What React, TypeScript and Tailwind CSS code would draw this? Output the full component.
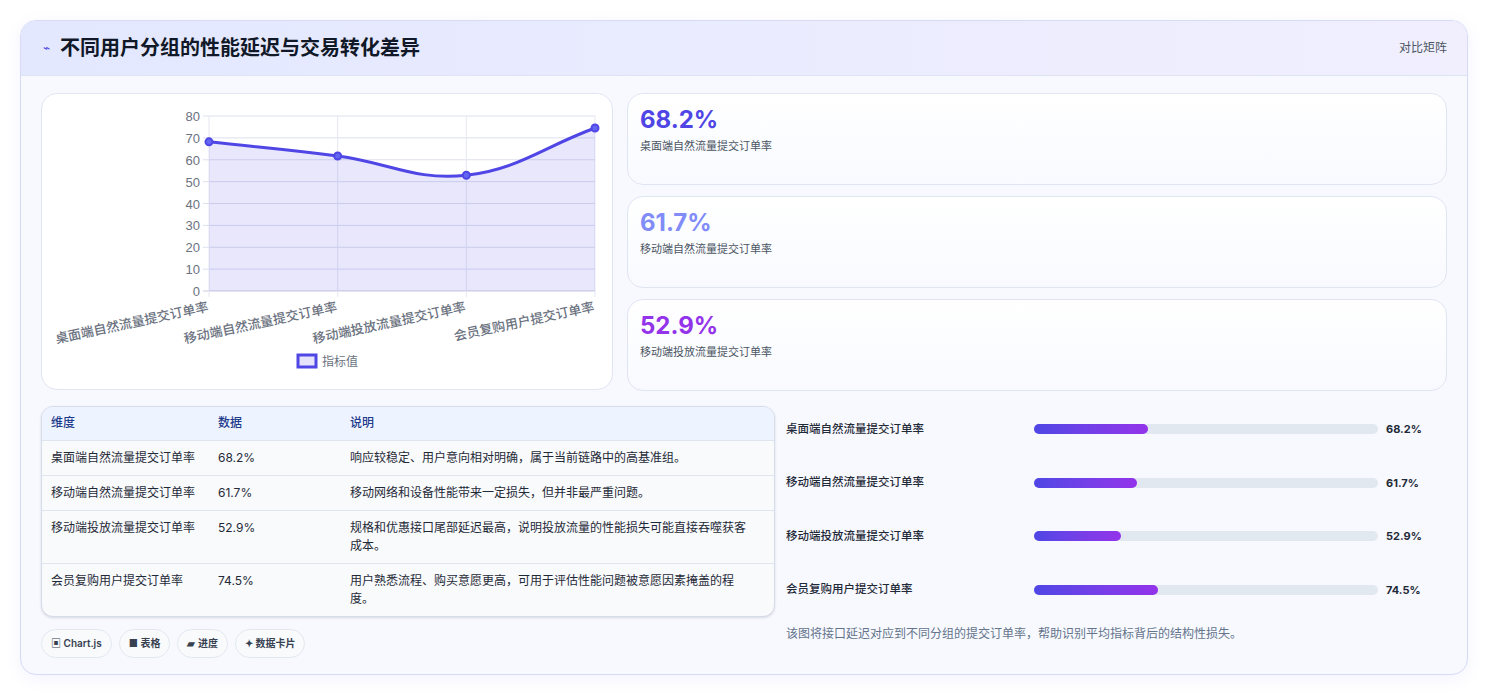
import React from "react";

const rows = [
  { n: "桌面端自然流量提交订单率", v: "68.2%", d: "响应较稳定、用户意向相对明确，属于当前链路中的高基准组。", w: 114 },
  { n: "移动端自然流量提交订单率", v: "61.7%", d: "移动网络和设备性能带来一定损失，但并非最严重问题。", w: 103 },
  { n: "移动端投放流量提交订单率", v: "52.9%", d: "规格和优惠接口尾部延迟最高，说明投放流量的性能损失可能直接吞噬获客成本。", w: 87 },
  { n: "会员复购用户提交订单率", v: "74.5%", d: "用户熟悉流程、购买意愿更高，可用于评估性能问题被意愿因素掩盖的程度。", w: 124 },
];

function Chart() {
  const L = 167, R = 553, T = 22, B = 197;
  const vals = [68.2, 61.7, 52.9, 74.5];
  const xs = vals.map((_, i) => L + ((R - L) * i) / 3);
  const ys = vals.map((v) => B - (v / 80) * (B - T));
  const dx = (R - L) / 3 * 0.4;
  let path = `M${xs[0]},${ys[0]}`;
  for (let i = 1; i < 4; i++) {
    const s0 = i - 2 >= 0 ? (ys[i] - ys[i - 2]) / 2 : ys[i] - ys[i - 1];
    const s1 = i + 1 < 4 ? (ys[i + 1] - ys[i - 1]) / 2 : ys[i] - ys[i - 1];
    path += ` C${xs[i - 1] + dx},${ys[i - 1] + s0 * 0.4} ${xs[i] - dx},${ys[i] - s1 * 0.4} ${xs[i]},${ys[i]}`;
  }
  const labels = ["桌面端自然流量提交订单率", "移动端自然流量提交订单率", "移动端投放流量提交订单率", "会员复购用户提交订单率"];
  return (
    <svg width="572" height="296" className="block">
      {[0, 10, 20, 30, 40, 50, 60, 70, 80].map((t) => {
        const y = B - (t / 80) * (B - T);
        return (
          <g key={t}>
            <line x1={L - 6} x2={R} y1={y} y2={y} stroke={t === 0 ? "#c7c9dc" : "#dde0ee"} />
            <text x={L - 9} y={y + 5} textAnchor="end" fontSize="13" fill="#6b7280" fontFamily="Liberation Sans, sans-serif">{t}</text>
          </g>
        );
      })}
      {xs.map((x, i) => (
        <line key={i} x1={x} x2={x} y1={T} y2={B + 6} stroke="#e5e7f3" />
      ))}
      <path d={`${path} L${R},${B} L${L},${B} Z`} fill="rgba(79,70,229,0.13)" />
      <path d={path} fill="none" stroke="#4f46e5" strokeWidth="3" />
      {xs.map((x, i) => (
        <circle key={i} cx={x} cy={ys[i]} r="3.5" fill="#6366f1" stroke="#4f46e5" strokeWidth="2" />
      ))}
      {labels.map((l, i) => (
        <text key={i} x={xs[i]} y={B + 20} textAnchor="end" fontSize="13" fontWeight="500" fill="#6b7280" transform={`rotate(-12 ${xs[i]} ${B + 20})`} fontFamily="Noto Sans CJK SC, sans-serif">{l}</text>
      ))}
      <rect x="256" y="261" width="18" height="12" fill="rgba(79,70,229,0.15)" stroke="#4f46e5" strokeWidth="3" />
      <text x="280" y="272" fontSize="12" fill="#6b7280" fontFamily="Noto Sans CJK SC, sans-serif">指标值</text>
    </svg>
  );
}

export default function App() {
  return (
    <div className="w-[1489px] h-[696px] bg-white pt-5 pl-5" style={{ fontFamily: "Inter, 'Noto Sans CJK SC', sans-serif" }}>
      <div className="w-[1448px] h-[655px] rounded-2xl border border-[#d6dcf5] bg-[#f7f9ff] overflow-hidden shadow-[0_4px_16px_rgba(99,102,241,0.08)]">
        <div className="h-[55px] flex items-center justify-between px-5 bg-gradient-to-r from-[#e3e8ff] to-[#f1effe] border-b border-[#dfe4f5]">
          <div className="flex items-center gap-[10px]">
            <span className="text-[#4f46e5] text-[12px] ml-[2px]">⌁</span>
            <span className="text-[20px] font-bold text-[#111827]">不同用户分组的性能延迟与交易转化差异</span>
          </div>
          <span className="text-[12px] text-[#4b5563]">对比矩阵</span>
        </div>
        <div className="px-5 pt-[17px]">
          <div className="flex gap-[14px]">
            <div className="w-[572px] h-[297px] rounded-2xl border border-[#e0e5f2] bg-white overflow-hidden">
              <Chart />
            </div>
            <div className="flex-1 flex flex-col gap-[11px]">
              {[
                ["68.2%", "桌面端自然流量提交订单率", "text-[#4f46e5]"],
                ["61.7%", "移动端自然流量提交订单率", "text-[#818cf8]"],
                ["52.9%", "移动端投放流量提交订单率", "text-[#9333ea]"],
              ].map(([v, l, c]) => (
                <div key={v} className="h-[92px] rounded-2xl border border-[#e0e5f2] bg-gradient-to-b from-white to-[#f8faff] px-[12px] pt-[10px]">
                  <div className={`text-[24px] font-bold leading-[32px] ${c}`}>{v}</div>
                  <div className="text-[11px] text-[#4b5563] mt-[2px]">{l}</div>
                </div>
              ))}
            </div>
          </div>
          <div className="flex gap-[13px] mt-[15px]">
            <div className="w-[734px]">
              <div className="rounded-xl border border-[#d5dcea] overflow-hidden bg-[#f8fafc] shadow-sm">
                <table className="w-full text-[12px] text-[#1f2937] border-collapse">
                  <thead>
                    <tr className="bg-[#eef4ff] text-[#1e3a8a] h-[33px] text-left">
                      <th className="font-medium pl-[9px] w-[176px]">维度</th>
                      <th className="font-medium w-[132px]">数据</th>
                      <th className="font-medium">说明</th>
                    </tr>
                  </thead>
                  <tbody>
                    {rows.map((r) => (
                      <tr key={r.n} className="border-t border-[#dfe5ee] align-top">
                        <td className="pl-[9px] py-[8px] leading-[18px]">{r.n}</td>
                        <td className="py-[8px] leading-[18px]">{r.v}</td>
                        <td className="py-[8px] pr-[18px] leading-[18px]">{r.d}</td>
                      </tr>
                    ))}
                  </tbody>
                </table>
              </div>
              <div className="flex gap-[7px] mt-[12px]">
                {["▣ Chart.js", "■ 表格", "▰ 进度", "✦ 数据卡片"].map((t) => (
                  <span key={t} className="h-[29px] px-[9px] flex items-center rounded-full border border-[#e2e8f0] bg-[#f8fafc] text-[10px] font-semibold text-[#374151]">{t}</span>
                ))}
              </div>
            </div>
            <div className="flex-1 -ml-[2px]">
              {rows.map((r) => (
                <div key={r.n} className="h-[54.5px] flex items-center -mt-[1px] first:-mt-[4px]">
                  <span className="w-[248px] text-[11.5px] font-medium text-[#1f2937]">{r.n}</span>
                  <div className="w-[344px] h-[10px] rounded-full bg-[#e2e8f0]">
                    <div className="h-full rounded-full bg-gradient-to-r from-[#4f46e5] to-[#9333ea]" style={{ width: r.w }} />
                  </div>
                  <span className="ml-2 text-[11px] font-bold text-[#1f2937]">{r.v}</span>
                </div>
              ))}
              <div className="mt-[8px] text-[12px] text-[#64748b]">该图将接口延迟对应到不同分组的提交订单率，帮助识别平均指标背后的结构性损失。</div>
            </div>
          </div>
        </div>
      </div>
    </div>
  );
}
